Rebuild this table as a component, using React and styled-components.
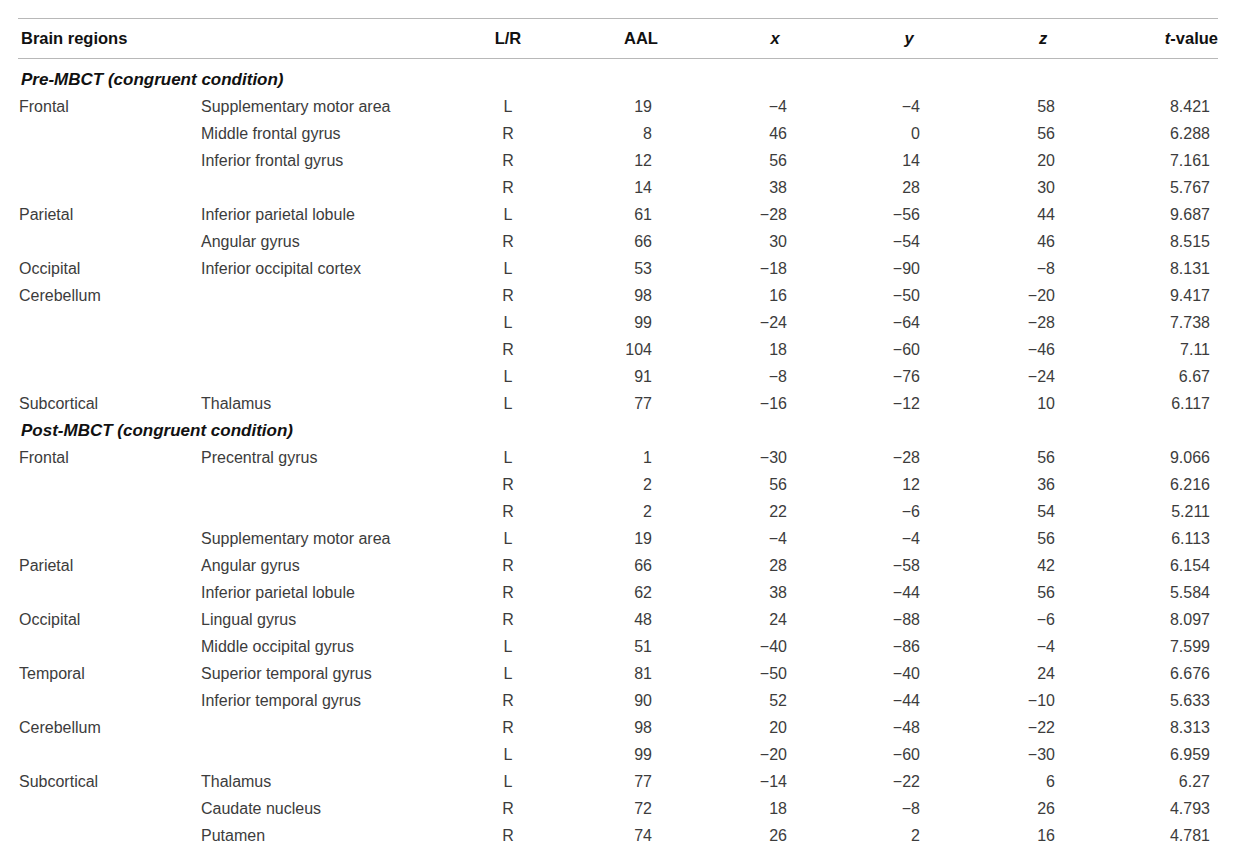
import styled, { createGlobalStyle } from "styled-components";

const Global = createGlobalStyle`
  body {
    margin: 0;
    background: #fff;
    font-family: "Liberation Sans", Arial, sans-serif;
  }
`;

const Page = styled.div`
  padding: 18px 18px 0 18px;
`;

const Table = styled.table`
  width: 1200px;
  border-collapse: collapse;
  table-layout: fixed;
  font-size: 16px;
  color: #3c3c3c;
`;

const Head = styled.thead`
  border-top: solid 1.5px #b8b8b8;
  border-bottom: solid 1.5px #b8b8b8;
`;

const HeadCell = styled.th`
  height: 39px;
  padding: 0 ${(p) => p.$pr || 0}px 0 ${(p) => p.$pl || 0}px;
  text-align: ${(p) => p.$align || "center"};
  font-size: 16.5px;
  font-weight: bold;
  font-style: ${(p) => (p.$italic ? "italic" : "normal")};
  color: #111;
`;

const Spacer = styled.tr`
  height: 8px;
`;

const Row = styled.tr`
  height: 27px;
`;

const SectionCell = styled.td`
  padding-left: 3px;
  font-size: 17px;
  font-weight: bold;
  font-style: italic;
  color: #111;
`;

const Cell = styled.td`
  padding: 0 ${(p) => p.$pr || 0}px 0 ${(p) => p.$pl || 0}px;
  text-align: ${(p) => p.$align || "left"};
  white-space: nowrap;
`;

const cols = [182, 260, 96, 170, 98, 170, 98, 126];

const sections = [
  {
    title: "Pre-MBCT (congruent condition)",
    rows: [
      ["Frontal", "Supplementary motor area", "L", "19", "−4", "−4", "58", "8.421"],
      ["", "Middle frontal gyrus", "R", "8", "46", "0", "56", "6.288"],
      ["", "Inferior frontal gyrus", "R", "12", "56", "14", "20", "7.161"],
      ["", "", "R", "14", "38", "28", "30", "5.767"],
      ["Parietal", "Inferior parietal lobule", "L", "61", "−28", "−56", "44", "9.687"],
      ["", "Angular gyrus", "R", "66", "30", "−54", "46", "8.515"],
      ["Occipital", "Inferior occipital cortex", "L", "53", "−18", "−90", "−8", "8.131"],
      ["Cerebellum", "", "R", "98", "16", "−50", "−20", "9.417"],
      ["", "", "L", "99", "−24", "−64", "−28", "7.738"],
      ["", "", "R", "104", "18", "−60", "−46", "7.11"],
      ["", "", "L", "91", "−8", "−76", "−24", "6.67"],
      ["Subcortical", "Thalamus", "L", "77", "−16", "−12", "10", "6.117"],
    ],
  },
  {
    title: "Post-MBCT (congruent condition)",
    rows: [
      ["Frontal", "Precentral gyrus", "L", "1", "−30", "−28", "56", "9.066"],
      ["", "", "R", "2", "56", "12", "36", "6.216"],
      ["", "", "R", "2", "22", "−6", "54", "5.211"],
      ["", "Supplementary motor area", "L", "19", "−4", "−4", "56", "6.113"],
      ["Parietal", "Angular gyrus", "R", "66", "28", "−58", "42", "6.154"],
      ["", "Inferior parietal lobule", "R", "62", "38", "−44", "56", "5.584"],
      ["Occipital", "Lingual gyrus", "R", "48", "24", "−88", "−6", "8.097"],
      ["", "Middle occipital gyrus", "L", "51", "−40", "−86", "−4", "7.599"],
      ["Temporal", "Superior temporal gyrus", "L", "81", "−50", "−40", "24", "6.676"],
      ["", "Inferior temporal gyrus", "R", "90", "52", "−44", "−10", "5.633"],
      ["Cerebellum", "", "R", "98", "20", "−48", "−22", "8.313"],
      ["", "", "L", "99", "−20", "−60", "−30", "6.959"],
      ["Subcortical", "Thalamus", "L", "77", "−14", "−22", "6", "6.27"],
      ["", "Caudate nucleus", "R", "72", "18", "−8", "26", "4.793"],
      ["", "Putamen", "R", "74", "26", "2", "16", "4.781"],
    ],
  },
];

// per-column cell alignment for the body
const cellProps = [
  { $align: "left", $pl: 1 },
  { $align: "left", $pl: 1 },
  { $align: "center" },
  { $align: "right", $pr: 74 },
  { $align: "right", $pr: 37 },
  { $align: "right", $pr: 74 },
  { $align: "right", $pr: 37 },
  { $align: "right", $pr: 8 },
];

export default function App() {
  return (
    <Page>
      <Global />
      <Table>
        <colgroup>
          {cols.map((w, i) => (
            <col key={i} style={{ width: w }} />
          ))}
        </colgroup>
        <Head>
          <tr>
            <HeadCell $align="left" $pl={3}>Brain regions</HeadCell>
            <HeadCell />
            <HeadCell>L/R</HeadCell>
            <HeadCell>AAL</HeadCell>
            <HeadCell $italic>x</HeadCell>
            <HeadCell $italic>y</HeadCell>
            <HeadCell $italic>z</HeadCell>
            <HeadCell $align="right">
              <i>t</i>-value
            </HeadCell>
          </tr>
        </Head>
        <tbody>
          <Spacer />
          {sections.map((s) => [
            <Row key={s.title}>
              <SectionCell colSpan={8}>{s.title}</SectionCell>
            </Row>,
            ...s.rows.map((r, i) => (
              <Row key={s.title + i}>
                {r.map((v, j) => (
                  <Cell key={j} {...cellProps[j]}>
                    {v}
                  </Cell>
                ))}
              </Row>
            )),
          ])}
        </tbody>
      </Table>
    </Page>
  );
}
